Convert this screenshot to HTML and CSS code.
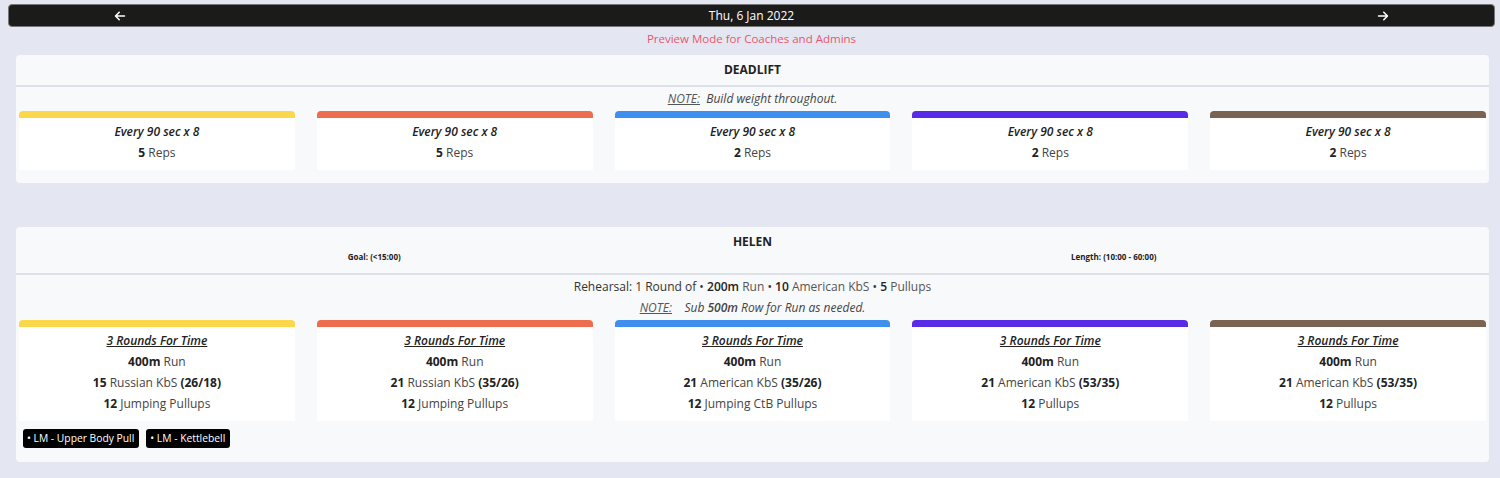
FILE: index.html
```html
<!DOCTYPE html>
<html lang="en">
<head>
<meta charset="UTF-8">
<title>Workout Preview</title>
<link rel="stylesheet" href="styles.css">
</head>
<body>
<div class="page">
  <!-- Date navigation -->
  <div class="date-bar">
    <span class="nav-arrow">
      <svg width="12" height="12" viewBox="0 0 448 512"><path fill="#fff" d="M9.4 233.4c-12.5 12.5-12.5 32.8 0 45.3l160 160c12.5 12.5 32.8 12.5 45.3 0s12.5-32.8 0-45.3L109.2 288H416c17.7 0 32-14.3 32-32s-14.3-32-32-32H109.3L214.6 118.6c12.5-12.5 12.5-32.8 0-45.3s-32.8-12.5-45.3 0l-160 160z"/></svg>
    </span>
    <span class="date-text">Thu, 6 Jan 2022</span>
    <span class="nav-arrow">
      <svg width="12" height="12" viewBox="0 0 448 512"><path fill="#fff" d="M438.6 278.6c12.5-12.5 12.5-32.8 0-45.3l-160-160c-12.5-12.5-32.8-12.5-45.3 0s-12.5 32.8 0 45.3L338.8 224H32c-17.7 0-32 14.3-32 32s14.3 32 32 32h306.7L233.4 393.4c-12.5 12.5-12.5 32.8 0 45.3s32.8 12.5 45.3 0l160-160z"/></svg>
    </span>
  </div>

  <div class="preview-note">Preview Mode for Coaches and Admins</div>

  <!-- Deadlift -->
  <div class="workout">
    <div class="workout-header">
      <div class="workout-title">DEADLIFT</div>
    </div>
    <div class="workout-note"><u>NOTE:</u>&nbsp; Build weight throughout.</div>
    <div class="levels">
      <div class="level yellow">
        <div class="level-body">
          <div class="level-title">Every 90 sec x 8</div>
          <div><b>5</b> Reps</div>
        </div>
      </div>
      <div class="level orange">
        <div class="level-body">
          <div class="level-title">Every 90 sec x 8</div>
          <div><b>5</b> Reps</div>
        </div>
      </div>
      <div class="level blue">
        <div class="level-body">
          <div class="level-title">Every 90 sec x 8</div>
          <div><b>2</b> Reps</div>
        </div>
      </div>
      <div class="level purple">
        <div class="level-body">
          <div class="level-title">Every 90 sec x 8</div>
          <div><b>2</b> Reps</div>
        </div>
      </div>
      <div class="level brown">
        <div class="level-body">
          <div class="level-title">Every 90 sec x 8</div>
          <div><b>2</b> Reps</div>
        </div>
      </div>
    </div>
  </div>

  <!-- Helen -->
  <div class="workout">
    <div class="workout-header">
      <div class="workout-title">HELEN</div>
      <div class="workout-meta">
        <span class="goal">Goal: (&lt;15:00)</span>
        <span class="length">Length: (10:00 - 60:00)</span>
      </div>
    </div>
    <div class="rehearsal">Rehearsal: 1 Round of &bull; <b>200m</b> <span class="light">Run</span> &bull; <b>10</b> <span class="light">American KbS</span> &bull; <b>5</b> <span class="light">Pullups</span></div>
    <div class="workout-note"><u>NOTE:</u>&nbsp;&nbsp;&nbsp; Sub <b>500m</b> Row for Run as needed.</div>
    <div class="levels">
      <div class="level yellow">
        <div class="level-body">
          <div class="level-title underline">3 Rounds For Time</div>
          <div><b>400m</b> Run</div>
          <div><b>15</b> Russian KbS <b>(26/18)</b></div>
          <div><b>12</b> Jumping Pullups</div>
        </div>
      </div>
      <div class="level orange">
        <div class="level-body">
          <div class="level-title underline">3 Rounds For Time</div>
          <div><b>400m</b> Run</div>
          <div><b>21</b> Russian KbS <b>(35/26)</b></div>
          <div><b>12</b> Jumping Pullups</div>
        </div>
      </div>
      <div class="level blue">
        <div class="level-body">
          <div class="level-title underline">3 Rounds For Time</div>
          <div><b>400m</b> Run</div>
          <div><b>21</b> American KbS <b>(35/26)</b></div>
          <div><b>12</b> Jumping CtB Pullups</div>
        </div>
      </div>
      <div class="level purple">
        <div class="level-body">
          <div class="level-title underline">3 Rounds For Time</div>
          <div><b>400m</b> Run</div>
          <div><b>21</b> American KbS <b>(53/35)</b></div>
          <div><b>12</b> Pullups</div>
        </div>
      </div>
      <div class="level brown">
        <div class="level-body">
          <div class="level-title underline">3 Rounds For Time</div>
          <div><b>400m</b> Run</div>
          <div><b>21</b> American KbS <b>(53/35)</b></div>
          <div><b>12</b> Pullups</div>
        </div>
      </div>
    </div>
    <div class="tags">
      <span class="tag">&bull; LM - Upper Body Pull</span>
      <span class="tag">&bull; LM - Kettlebell</span>
    </div>
  </div>
</div>
</body>
</html>
```

FILE: styles.css
```css
body {
    margin: 0;
    padding: 0;
    background-color: #e4e6f2;
    font-family: 'Open Sans', sans-serif;
    font-size: 12px;
    color: #444;
}

.page {
    padding: 4px 5px 0 8px;
}

/* Date bar */
.date-bar {
    display: grid;
    grid-template-columns: 222px 1fr 222px;
    align-items: center;
    height: 21px;
    background-color: #1b1b1b;
    border: 1px solid #777;
    border-radius: 4px;
    color: #fff;
}

.nav-arrow {
    display: flex;
    justify-content: center;
}

.nav-arrow svg {
    display: block;
}

.date-text {
    text-align: center;
    font-size: 12px;
}

.preview-note {
    text-align: center;
    color: #e9566d;
    font-size: 11.5px;
    line-height: 24px;
    margin-bottom: 4px;
}

/* Workout cards */
.workout {
    margin: 0 6px 44px 8px;
    padding: 0 3px 13px;
    background-color: #f8f9fb;
    border-radius: 4px;
}

.workout:last-child {
    margin-bottom: 0;
}

.workout-header {
    margin: 0 -3px 1px;
    padding: 6px 0 0;
    min-height: 24px;
    border-bottom: 2px solid #dddfe9;
    text-align: center;
}

.workout-title {
    font-weight: 700;
    color: #222;
    font-size: 12px;
    line-height: 18px;
}

.workout-meta {
    display: grid;
    grid-template-columns: 1fr 1fr;
    font-size: 8px;
    font-weight: 700;
    color: #222;
    line-height: 12px;
    padding: 0 0 10px;
}

.workout-meta .goal {
    padding-right: 20px;
}

.workout-meta .length {
    padding-right: 14px;
}

.workout-note {
    text-align: center;
    font-style: italic;
    line-height: 21px;
}

.workout-note u {
    color: #555;
}

.workout-note b {
    font-weight: 600;
}

.rehearsal {
    text-align: center;
    line-height: 21px;
    color: #333;
}

.rehearsal b {
    font-weight: 600;
    color: #222;
}

.rehearsal .light {
    color: #555;
}

.levels {
    display: grid;
    grid-template-columns: repeat(5, 1fr);
    gap: 22px;
    margin-top: 2px;
}

.level {
    border-top: 7px solid;
    border-radius: 4px 4px 0 0;
    background-color: #fff;
}

.level.yellow { border-color: #fbd84b; }
.level.orange { border-color: #ee6d4e; }
.level.blue { border-color: #3e8fee; }
.level.purple { border-color: #5a2be7; }
.level.brown { border-color: #7b6351; }

.level-body {
    padding: 3px 0 7px;
    text-align: center;
    line-height: 21px;
}

.level-body b {
    font-weight: 700;
    color: #222;
}

.level-title {
    font-style: italic;
    font-weight: 600;
    color: #222;
}

.level-title.underline {
    text-decoration: underline;
}

/* Tags */
.tags {
    display: flex;
    gap: 7px;
    margin: 8px 0 1px 4px;
}

.tag {
    background-color: #000;
    color: #fff;
    font-size: 10.3px;
    line-height: 19px;
    padding: 0 5px 0 4px;
    border-radius: 3px;
}
```
